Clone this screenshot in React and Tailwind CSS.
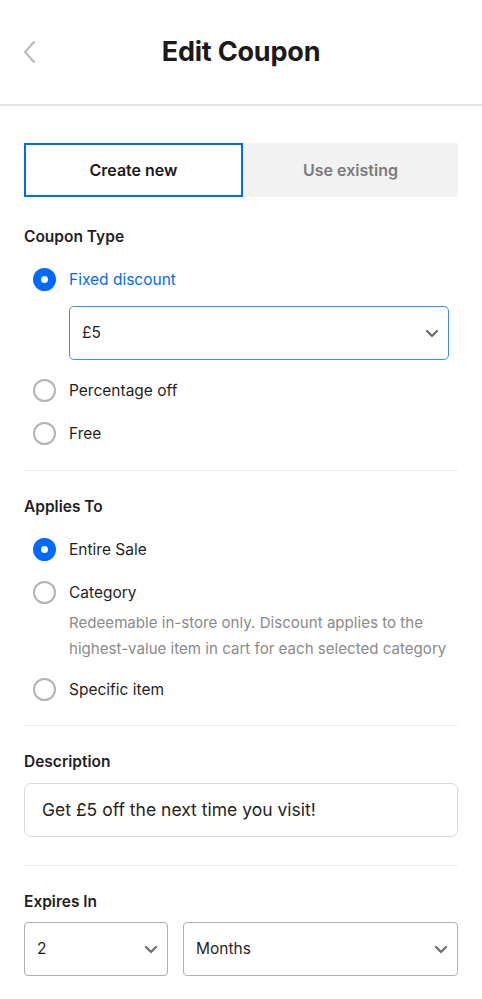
import React from "react";

const Radio = ({ checked }) =>
  checked ? (
    <span className="flex h-[23px] w-[23px] shrink-0 items-center justify-center rounded-full bg-[#006aff]">
      <span className="h-[7px] w-[7px] rounded-full bg-white" />
    </span>
  ) : (
    <span className="h-[23px] w-[23px] shrink-0 rounded-full border-2 border-[#b3b3b3] bg-white" />
  );

const Chevron = ({ className = "" }) => (
  <svg width="14" height="9" viewBox="0 0 14 9" className={className}>
    <path d="M2 2l5 5 5-5" fill="none" stroke="#6b6b6b" strokeWidth="2.2" strokeLinecap="round" strokeLinejoin="round" />
  </svg>
);

const Option = ({ label, checked, blue, children }) => (
  <div className="flex items-start pl-[9px]">
    <div className="flex h-[43px] items-center">
      <Radio checked={checked} />
    </div>
    <div className="ml-[13px] flex-1">
      <div className={`flex h-[43px] items-center text-[15.5px] ${blue ? "text-[#006aff]" : "text-[#1f1f1f]"}`}>{label}</div>
      {children}
    </div>
  </div>
);

const App = () => {
  return (
    <div className="min-h-[999px] w-[482px] bg-white text-[#1f1f1f]" style={{ fontFamily: "Inter, 'Noto Sans', sans-serif" }}>
      {/* header */}
      <header className="relative flex h-[106px] items-center justify-center border-b-2 border-[#e5e5e5]">
        <svg width="14" height="24" viewBox="0 0 14 24" className="absolute left-[23px] top-[40px]">
          <path d="M11 2L2 12l9 10" fill="none" stroke="#b5b9bf" strokeWidth="2" strokeLinecap="round" strokeLinejoin="round" />
        </svg>
        <h1 className="text-[27px] font-bold tracking-[-0.2px] text-[#1a1a1a]">Edit Coupon</h1>
      </header>

      <div className="px-[24px] pt-[37px]">
        {/* tabs */}
        <div className="flex h-[54px]">
          <button className="flex-1 border-2 border-[#006aff] bg-white text-[16px] font-semibold text-[#1a1a1a]">Create new</button>
          <button className="flex-1 bg-[#f2f2f2] text-[16px] font-semibold text-[#7a7a7a]">Use existing</button>
        </div>

        {/* coupon type */}
        <div className="border-b border-[#efefef] pb-[15px]">
          <h2 className="pt-[29px] text-[15.5px] font-semibold leading-[22px]">Coupon Type</h2>
          <div className="mt-[10px]">
            <Option label="Fixed discount" checked blue>
              <div className="mb-[9px] mr-[9px] mt-[5px] flex h-[54px] items-center justify-between rounded-[5px] border-[1.5px] border-[#3d8bff] pl-[12px] pr-[9px] text-[15.5px]">
                <span>£5</span>
                <Chevron />
              </div>
            </Option>
            <Option label="Percentage off" />
            <Option label="Free" />
          </div>
        </div>

        {/* applies to */}
        <div className="border-b border-[#efefef] pb-[14px]">
          <h2 className="pt-[25px] text-[15.5px] font-semibold leading-[22px]">Applies To</h2>
          <div className="mt-[10px]">
            <Option label="Entire Sale" checked />
            <Option label="Category">
              <p className="-mt-[4px] mb-[6px] text-[15.1px] leading-[26px] text-[#8a8a8a]">
                Redeemable in-store only. Discount applies to the highest-value item in cart for each selected category
              </p>
            </Option>
            <Option label="Specific item" />
          </div>
        </div>

        {/* description */}
        <div className="border-b border-[#efefef] pb-[28px]">
          <h2 className="pt-[25px] text-[15.5px] font-semibold leading-[22px]">Description</h2>
          <div className="mt-[10px] flex h-[54px] items-center rounded-[7px] border border-[#d9d9d9] px-[17px] text-[17.5px] text-[#1f1f1f]">
            Get £5 off the next time you visit!
          </div>
        </div>

        {/* expires */}
        <div>
          <h2 className="pt-[25px] text-[15.5px] font-semibold leading-[22px]">Expires In</h2>
          <div className="mt-[9px] flex gap-[15px]">
            <div className="flex h-[54px] w-[144px] items-center justify-between rounded-[4px] border border-[#b0b0b0] pl-[12px] pr-[9px] text-[15.5px]">
              <span>2</span>
              <Chevron />
            </div>
            <div className="flex h-[54px] flex-1 items-center justify-between rounded-[4px] border border-[#b0b0b0] pl-[12px] pr-[9px] text-[15.5px]">
              <span>Months</span>
              <Chevron />
            </div>
          </div>
        </div>
      </div>
    </div>
  );
};

export default App;
